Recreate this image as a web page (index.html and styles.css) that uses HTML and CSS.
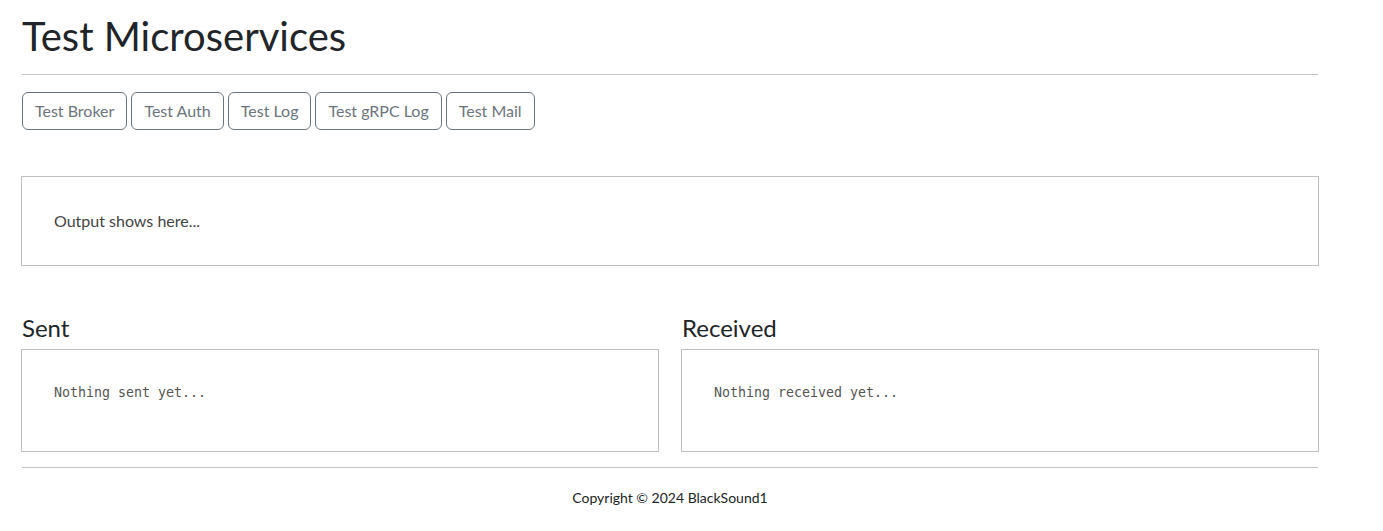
FILE: index.html
```html
<!DOCTYPE html>
<html lang="en">
<head>
<meta charset="utf-8">
<title>Microservices</title>
<link rel="stylesheet" href="styles.css">
</head>
<body>
<div class="container">
  <h1 class="title">Test Microservices</h1>
  <hr class="rule">
  <div class="buttons">
    <button class="btn">Test Broker</button>
    <button class="btn">Test Auth</button>
    <button class="btn">Test Log</button>
    <button class="btn">Test gRPC Log</button>
    <button class="btn">Test Mail</button>
  </div>
  <div class="output box">
    <span class="output-text">Output shows here...</span>
  </div>
  <div class="panels">
    <div class="panel">
      <h4 class="panel-title">Sent</h4>
      <div class="box code-box"><pre class="code">Nothing sent yet...</pre></div>
    </div>
    <div class="panel">
      <h4 class="panel-title">Received</h4>
      <div class="box code-box"><pre class="code">Nothing received yet...</pre></div>
    </div>
  </div>
  <hr class="rule footer-rule">
  <footer class="footer">Copyright &copy; 2024 BlackSound1</footer>
</div>
</body>
</html>
```
FILE: styles.css
```css
* { box-sizing: border-box; }
html, body { margin: 0; padding: 0; background: #fff; }
body {
  font-family: "Lato", "Noto Sans", sans-serif;
  font-size: 16px;
  line-height: 1.5;
  color: #212529;
}
.container {
  width: 1296px;
  margin-left: 22px;
  padding-top: 12px;
}
.title {
  font-size: 40px;
  font-weight: 400;
  line-height: 1.2;
  margin: 0 0 14px 0;
}
.rule {
  border: 0;
  border-top: 1px solid #c4c4c4;
  margin: 0 0 17px 0;
  height: 0;
}
.buttons {
  display: flex;
  gap: 4px;
}
.btn {
  font-family: inherit;
  font-size: 16px;
  line-height: 24px;
  padding: 6px 12px;
  color: #6c757d;
  background: transparent;
  border: 1px solid #6c757d;
  border-radius: 6px;
}
.box {
  border: 1px solid #c0c0c0;
  margin: 0 -1px;
  padding: 32px;
}
.output {
  margin-top: 46px;
  color: #444;
}
.output-text { display: block; line-height: 24px; }
.panels {
  display: grid;
  grid-template-columns: 1fr 1fr;
  gap: 24px;
  margin-top: 46px;
}
.panel-title {
  font-size: 24px;
  font-weight: 400;
  line-height: 1.2;
  margin: 0 0 6px 0;
  padding-top: 2px;
}
.code-box { padding-bottom: 32px; }
.code {
  margin: 0 0 16px 0;
  font-family: "DejaVu Sans Mono", monospace;
  font-size: 13.3px;
  line-height: 21px;
  color: #555;
}
.footer-rule { margin: 15px 0 0 0; }
.footer {
  text-align: center;
  font-size: 14px;
  padding-top: 19px;
}
```
